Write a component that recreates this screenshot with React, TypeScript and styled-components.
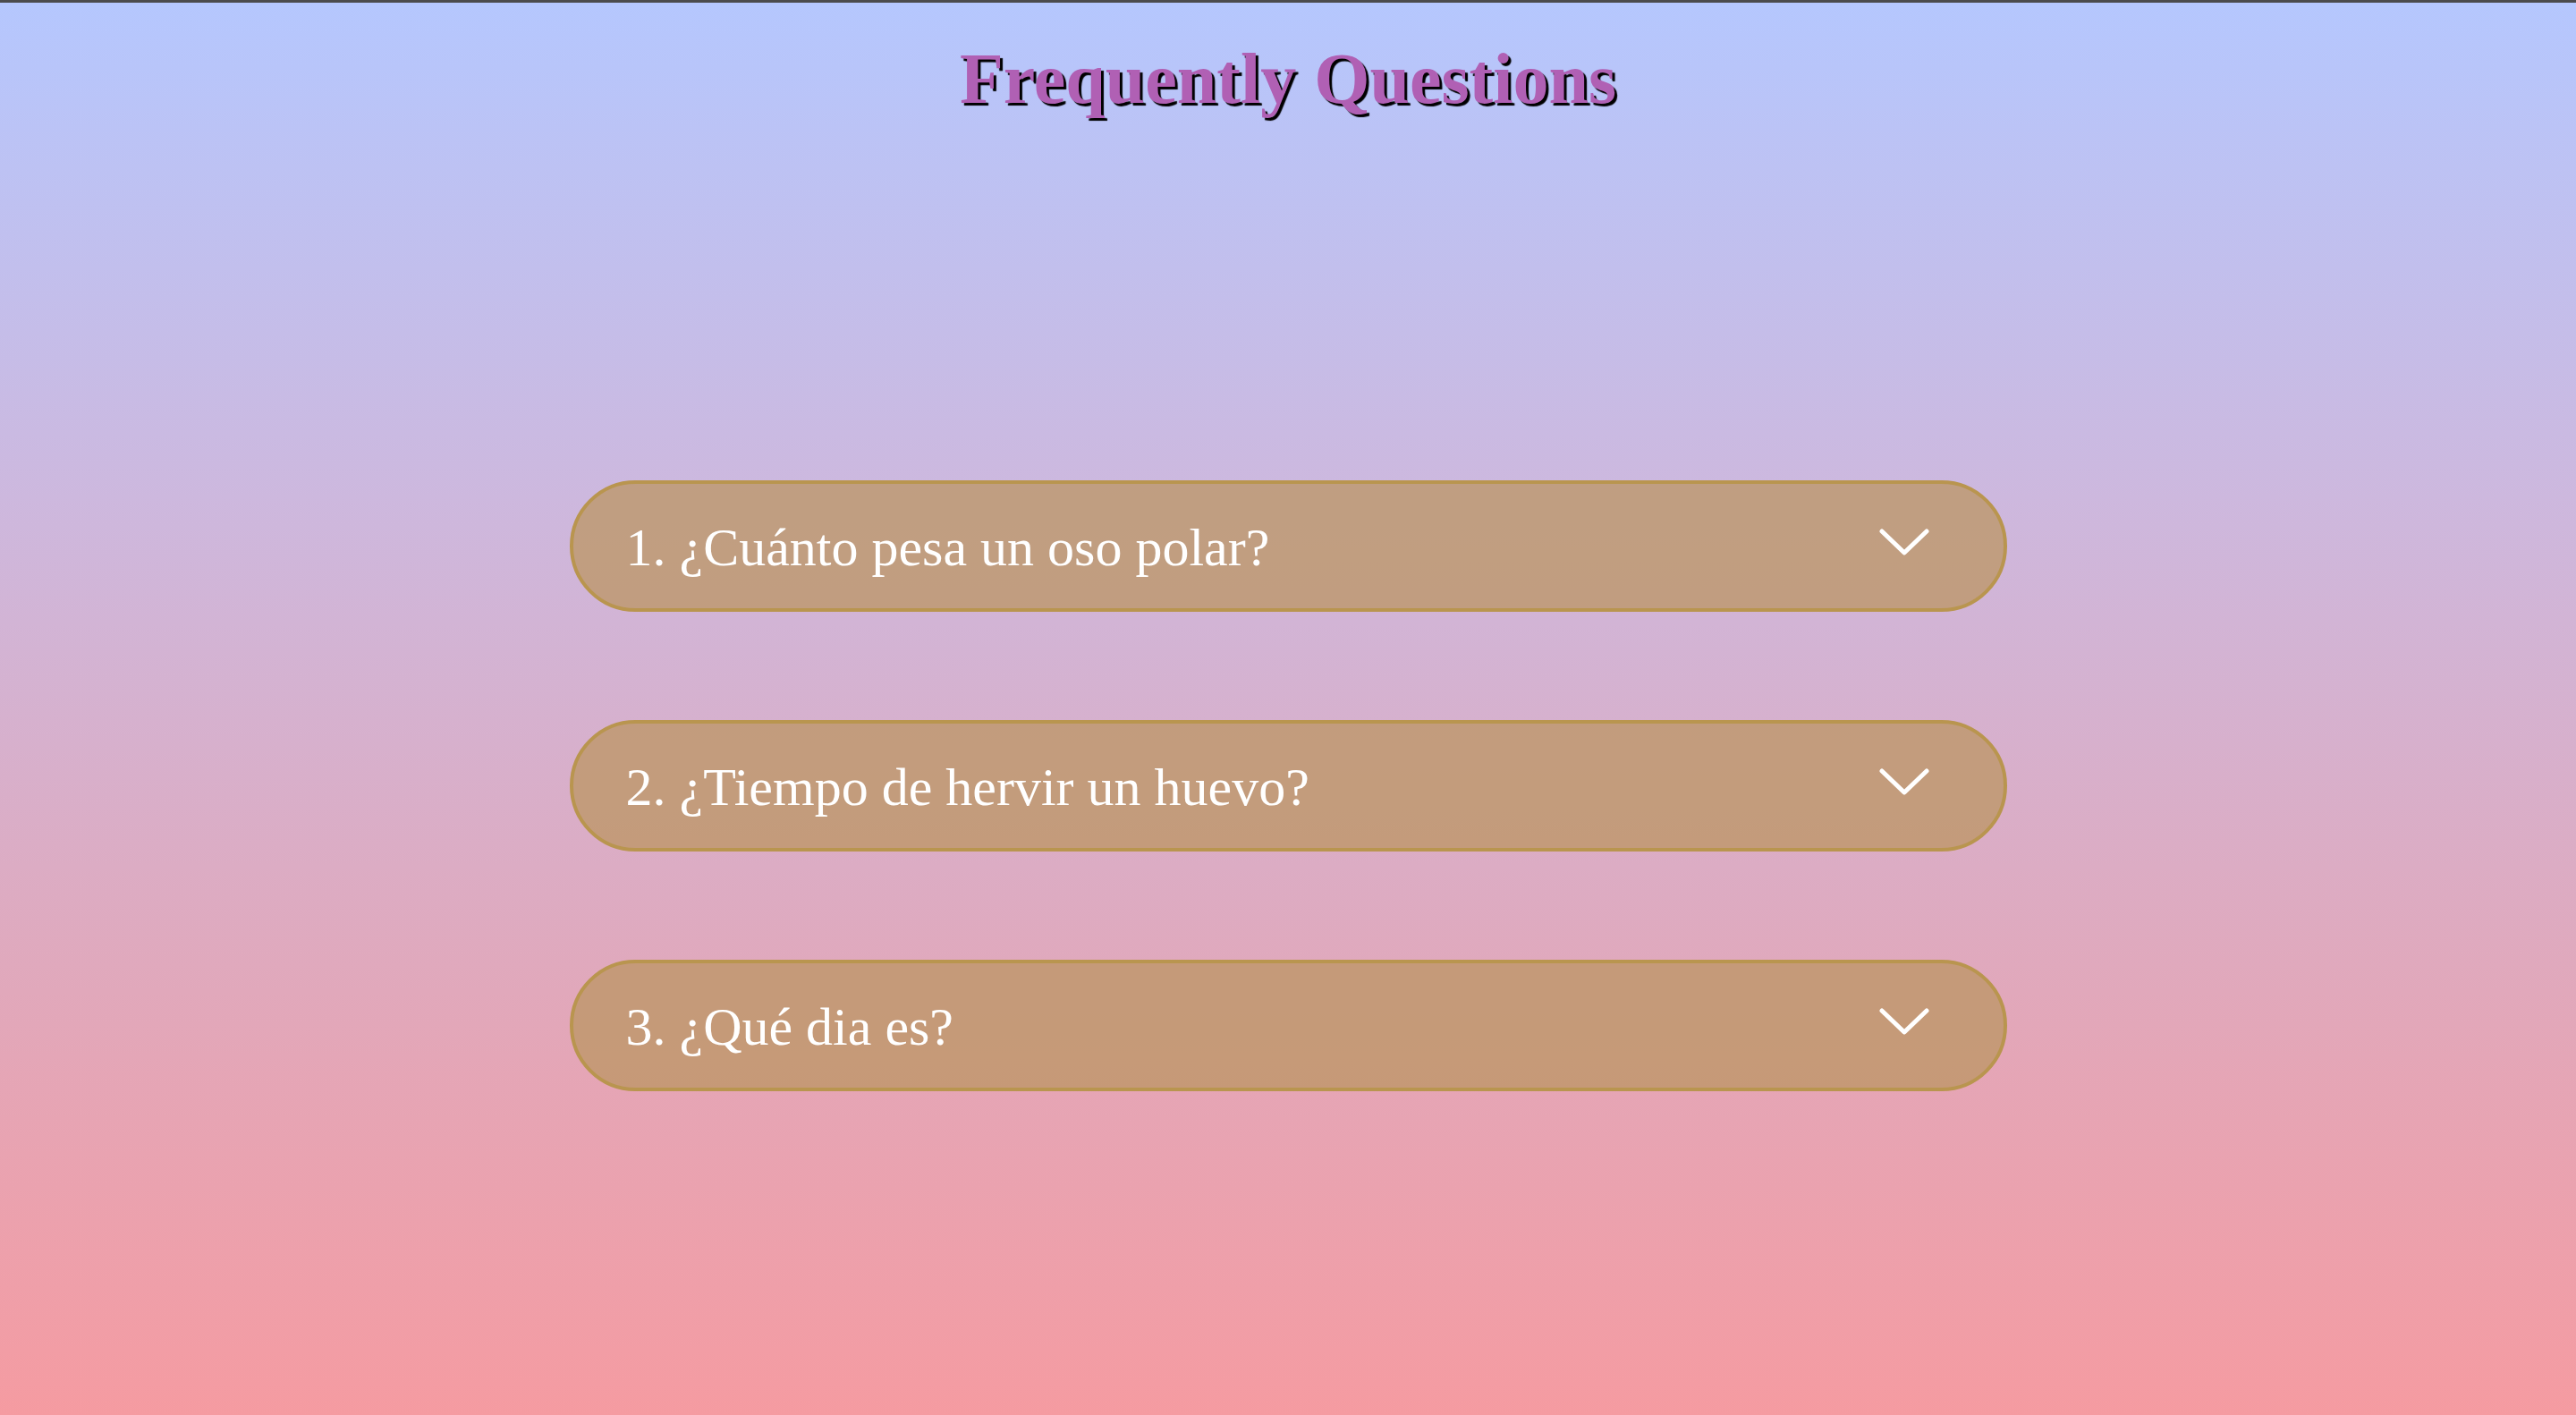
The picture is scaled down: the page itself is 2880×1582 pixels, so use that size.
import React from "react";
import styled, { createGlobalStyle } from "styled-components";

const Global = createGlobalStyle`
  html, body { margin: 0; padding: 0; }
  body { font-family: "Liberation Serif", "Times New Roman", serif; }
`;

const Page = styled.div`
  min-height: 1582px;
  box-sizing: border-box;
  border-top: 3px solid #4b4b4d;
  background: linear-gradient(180deg, #b5c7fe 0%, #cdb8de 35%, #e1a8bb 70%, #f59ba1 100%);
  display: flex;
  flex-direction: column;
  align-items: center;
`;

const Title = styled.h1`
  margin: 40px 0 0;
  font-size: 80px;
  font-weight: bold;
  color: #b060b4;
  text-shadow: 3px 3px 1px #000;
  line-height: normal;
`;

const List = styled.div`
  margin-top: 403px;
  display: flex;
  flex-direction: column;
  gap: 121px;
`;

const Item = styled.div`
  width: 1607px;
  height: 147px;
  box-sizing: border-box;
  border: 4px solid #b9954f;
  border-radius: 74px;
  background: rgba(188, 150, 100, 0.76);
  display: flex;
  align-items: center;
  justify-content: space-between;
  padding: 4px 83px 0 59px;
`;

const Question = styled.span`
  color: #fff;
  font-size: 60px;
  line-height: normal;
`;

const Chevron = styled.svg`
  width: 56px;
  height: 30px;
  margin-bottom: 14px;
`;

const questions = [
  "1. ¿Cuánto pesa un oso polar?",
  "2. ¿Tiempo de hervir un huevo?",
  "3. ¿Qué dia es?",
];

export default function App() {
  return (
    <>
      <Global />
      <Page>
        <Title>Frequently Questions</Title>
        <List>
          {questions.map((q) => (
            <Item key={q}>
              <Question>{q}</Question>
              <Chevron viewBox="0 0 56 30" fill="none">
                <path
                  d="M3 3 L28 27 L53 3"
                  stroke="#fff"
                  strokeWidth="5"
                  strokeLinecap="round"
                  strokeLinejoin="round"
                />
              </Chevron>
            </Item>
          ))}
        </List>
      </Page>
    </>
  );
}
